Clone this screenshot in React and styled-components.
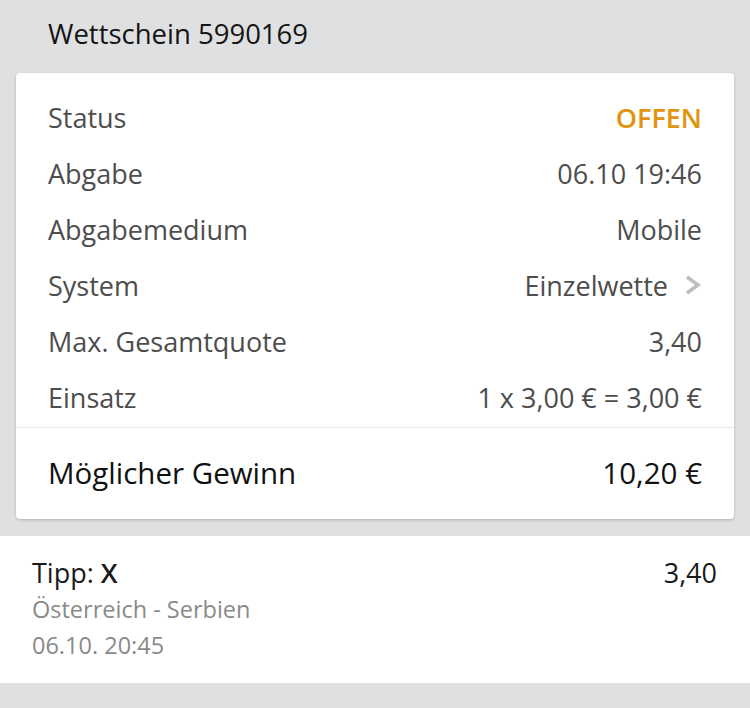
import React from "react";
import styled, { createGlobalStyle } from "styled-components";

const GlobalStyle = createGlobalStyle`
    html, body {
        margin: 0;
        padding: 0;
        background: #dfe0e2;
        font-family: "Open Sans", "Noto Sans", sans-serif;
    }
`;

const Page = styled.div`
    width: 750px;
    height: 708px;
    background: #dfe0e2;
    display: flex;
    flex-direction: column;
`;

const Title = styled.div`
    height: 73px;
    padding: 0 48px 6px;
    display: flex;
    align-items: center;
    box-sizing: border-box;
    font-size: 27.5px;
    color: #141414;
`;

const Card = styled.div`
    margin: 0 16px;
    background: #fff;
    border-radius: 4px;
    box-shadow: 0 1px 3px rgba(0, 0, 0, 0.22);
    padding-top: 18px;
`;

const Row = styled.div`
    height: 56px;
    box-sizing: border-box;
    padding: 0 32px 4px;
    display: flex;
    align-items: center;
    justify-content: space-between;
    font-size: 27px;
    color: #4d4d4d;
`;

const Value = styled.span`
    display: flex;
    align-items: center;
    gap: 16px;
    color: ${(p) => (p.status ? "#e0940f" : "#4d4d4d")};
    font-weight: ${(p) => (p.status ? 600 : 400)};
`;

const Divider = styled.div`
    height: 1px;
    background: #e6e6e6;
`;

const Total = styled.div`
    height: 91px;
    box-sizing: border-box;
    padding: 0 32px 2px;
    display: flex;
    align-items: center;
    justify-content: space-between;
    font-size: 29.5px;
    color: #111;
`;

const Tip = styled.div`
    margin-top: 17px;
    background: #fff;
    padding: 19px 33px 20px 32px;
    display: flex;
    justify-content: space-between;
`;

const TipInfo = styled.div`
    display: flex;
    flex-direction: column;
`;

const TipLine = styled.div`
    line-height: 36px;
    font-size: ${(p) => (p.main ? "27px" : "23.5px")};
    color: ${(p) => (p.main ? "#1a1a1a" : "#8a8a8a")};
    b {
        font-weight: 600;
    }
`;

const Odds = styled.div`
    line-height: 36px;
    font-size: 27px;
    color: #1a1a1a;
`;

const Chevron = () => (
    <svg width="18" height="22" viewBox="0 0 18 22">
        <path d="M3 3 L14 11 L3 19" fill="none" stroke="#bdbdbd" strokeWidth="3.5" />
    </svg>
);

const rows = [
    ["Status", "OFFEN"],
    ["Abgabe", "06.10 19:46"],
    ["Abgabemedium", "Mobile"],
    ["System", "Einzelwette"],
    ["Max. Gesamtquote", "3,40"],
    ["Einsatz", "1 x 3,00 € = 3,00 €"],
];

const App = () => {
    return (
        <Page>
            <GlobalStyle />
            <Title>Wettschein 5990169</Title>
            <Card>
                {rows.map(([label, value]) => (
                    <Row key={label}>
                        <span>{label}</span>
                        <Value status={label === "Status"}>
                            {value}
                            {label === "System" && <Chevron />}
                        </Value>
                    </Row>
                ))}
                <Divider />
                <Total>
                    <span>Möglicher Gewinn</span>
                    <span>10,20 €</span>
                </Total>
            </Card>
            <Tip>
                <TipInfo>
                    <TipLine main>
                        Tipp: <b>X</b>
                    </TipLine>
                    <TipLine>Österreich - Serbien</TipLine>
                    <TipLine>06.10. 20:45</TipLine>
                </TipInfo>
                <Odds>3,40</Odds>
            </Tip>
        </Page>
    );
};

export default App;
